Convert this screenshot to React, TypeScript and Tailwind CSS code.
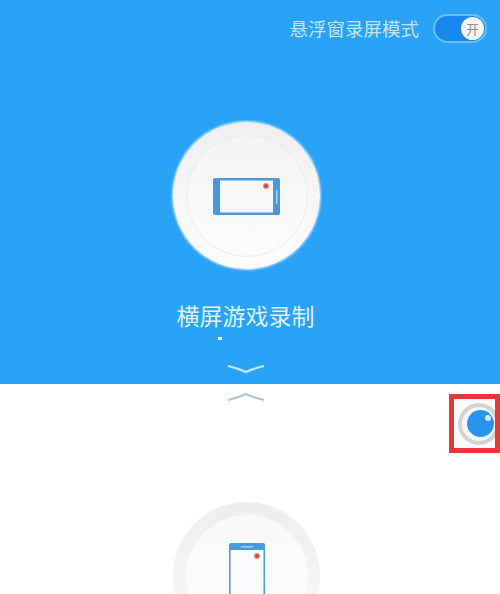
import React from 'react';

const CJK = 'font-["Noto_Sans_CJK_SC","Noto_Sans",sans-serif]';

function Landscape() {
  return (
    <svg width="68" height="38" viewBox="0 0 68 38">
      <rect x="0" y="0" width="67" height="37" rx="2" fill="#4a98dc" />
      <rect x="7" y="2.5" width="53" height="32" fill="#f7f8f9" />
      <rect x="63" y="12" width="1.5" height="14" fill="#a9cdec" />
      <circle cx="53" cy="8" r="3" fill="#e0907a" />
      <circle cx="53" cy="8" r="1.8" fill="#c9402c" />
    </svg>
  );
}

function Portrait() {
  return (
    <svg width="36" height="52" viewBox="0 0 36 52">
      <path d="M2 0h32a2 2 0 0 1 2 2v50H0V2a2 2 0 0 1 2-2z" fill="#4a98dc" />
      <rect x="1.5" y="7" width="33" height="45" fill="#f9fafb" />
      <rect x="12" y="3" width="12" height="1.5" fill="#a9cdec" />
      <circle cx="28" cy="13" r="3" fill="#e0907a" />
      <circle cx="28" cy="13" r="1.8" fill="#c9402c" />
    </svg>
  );
}

function Chevron({ up, color }: { up?: boolean; color: string }) {
  return (
    <svg width="38" height="10" viewBox="0 0 38 10" className="block">
      <path d={up ? 'M1 8 Q10 6 19 2 Q28 6 37 8' : 'M1 2 Q10 4 19 8 Q28 4 37 2'} fill="none" stroke={color} strokeWidth="2.2" />
    </svg>
  );
}

export default function App() {
  return (
    <div className={`relative w-[500px] h-[594px] overflow-hidden bg-white ${CJK}`}>
      {/* 上半部 橫屏 */}
      <div className="h-[384px] bg-[#2aa3f6] flex flex-col">
        <div className="flex items-center justify-end h-[57px] pr-[13px]">
          <span className="text-[18.5px] leading-none text-[#c4e6fc] mr-[14px]">悬浮窗录屏模式</span>
          <div className="w-[54px] h-[29px] rounded-full border-2 border-[#6cc0f8] bg-[#1787ee] flex items-center justify-end pr-[1px]">
            <div className="w-[23px] h-[23px] rounded-full bg-[#f6f7f5] flex items-center justify-center text-[13px] leading-none text-[#8a8f92]">开</div>
          </div>
        </div>
        <div className="ml-[173px] mt-[65px] w-[147px] h-[147px] rounded-full bg-gradient-to-b from-[#efefef] to-[#fcfcfc] shadow-[0_0_2px_1px_#c5e8fd] flex items-center justify-center">
          <div className="w-[122px] h-[122px] rounded-full bg-gradient-to-b from-[#f3f3f3] to-[#fbfbfb] border border-[#ebebeb] flex items-center justify-center">
            <div className="mt-[2px]">
              <Landscape />
            </div>
          </div>
        </div>
        <div className="mt-[31px] text-center text-[23px] leading-[30px] text-[#def3fe] pr-[9px]">横屏游戏录制</div>
        <div className="ml-[218px] mt-[7px] w-[4px] h-[3px] bg-[#e6f5fe]" />
        <div className="ml-[227px] mt-[24px]">
          <Chevron color="#cdeafd" />
        </div>
      </div>
      {/* 下半部 豎屏 */}
      <div className="flex flex-col">
        <div className="ml-[227px] mt-[8px]">
          <Chevron up color="#b6c3d4" />
        </div>
        <div className="ml-[173px] mt-[100px] w-[147px] h-[147px] rounded-full bg-gradient-to-b from-[#eeeeee] to-[#f8f8f8] flex items-start justify-center">
          <div className="mt-[13px] w-[122px] h-[122px] rounded-full bg-gradient-to-b from-[#f8f8f8] to-[#fdfdfd] flex items-start justify-center pt-[28px]">
            <Portrait />
          </div>
        </div>
      </div>
      {/* 懸浮按鈕 紅框標註 */}
      <div className="absolute left-[449px] top-[394px] w-[51px] h-[59px] border-[5px] border-[#e5383b] bg-[#fbfbf9] overflow-hidden flex items-center pl-[4px]">
        <div className="shrink-0 w-[42px] h-[42px] rounded-full border-[4px] border-[#d2d2d2] bg-[#f6f6f6] flex items-center justify-center">
          <div className="relative ml-[2px] w-[27px] h-[27px] rounded-full bg-[#2a93ee]">
            <div className="absolute right-[3px] top-[5px] w-[6px] h-[6px] rounded-full bg-[#cfe8fb]" />
          </div>
        </div>
      </div>
    </div>
  );
}
